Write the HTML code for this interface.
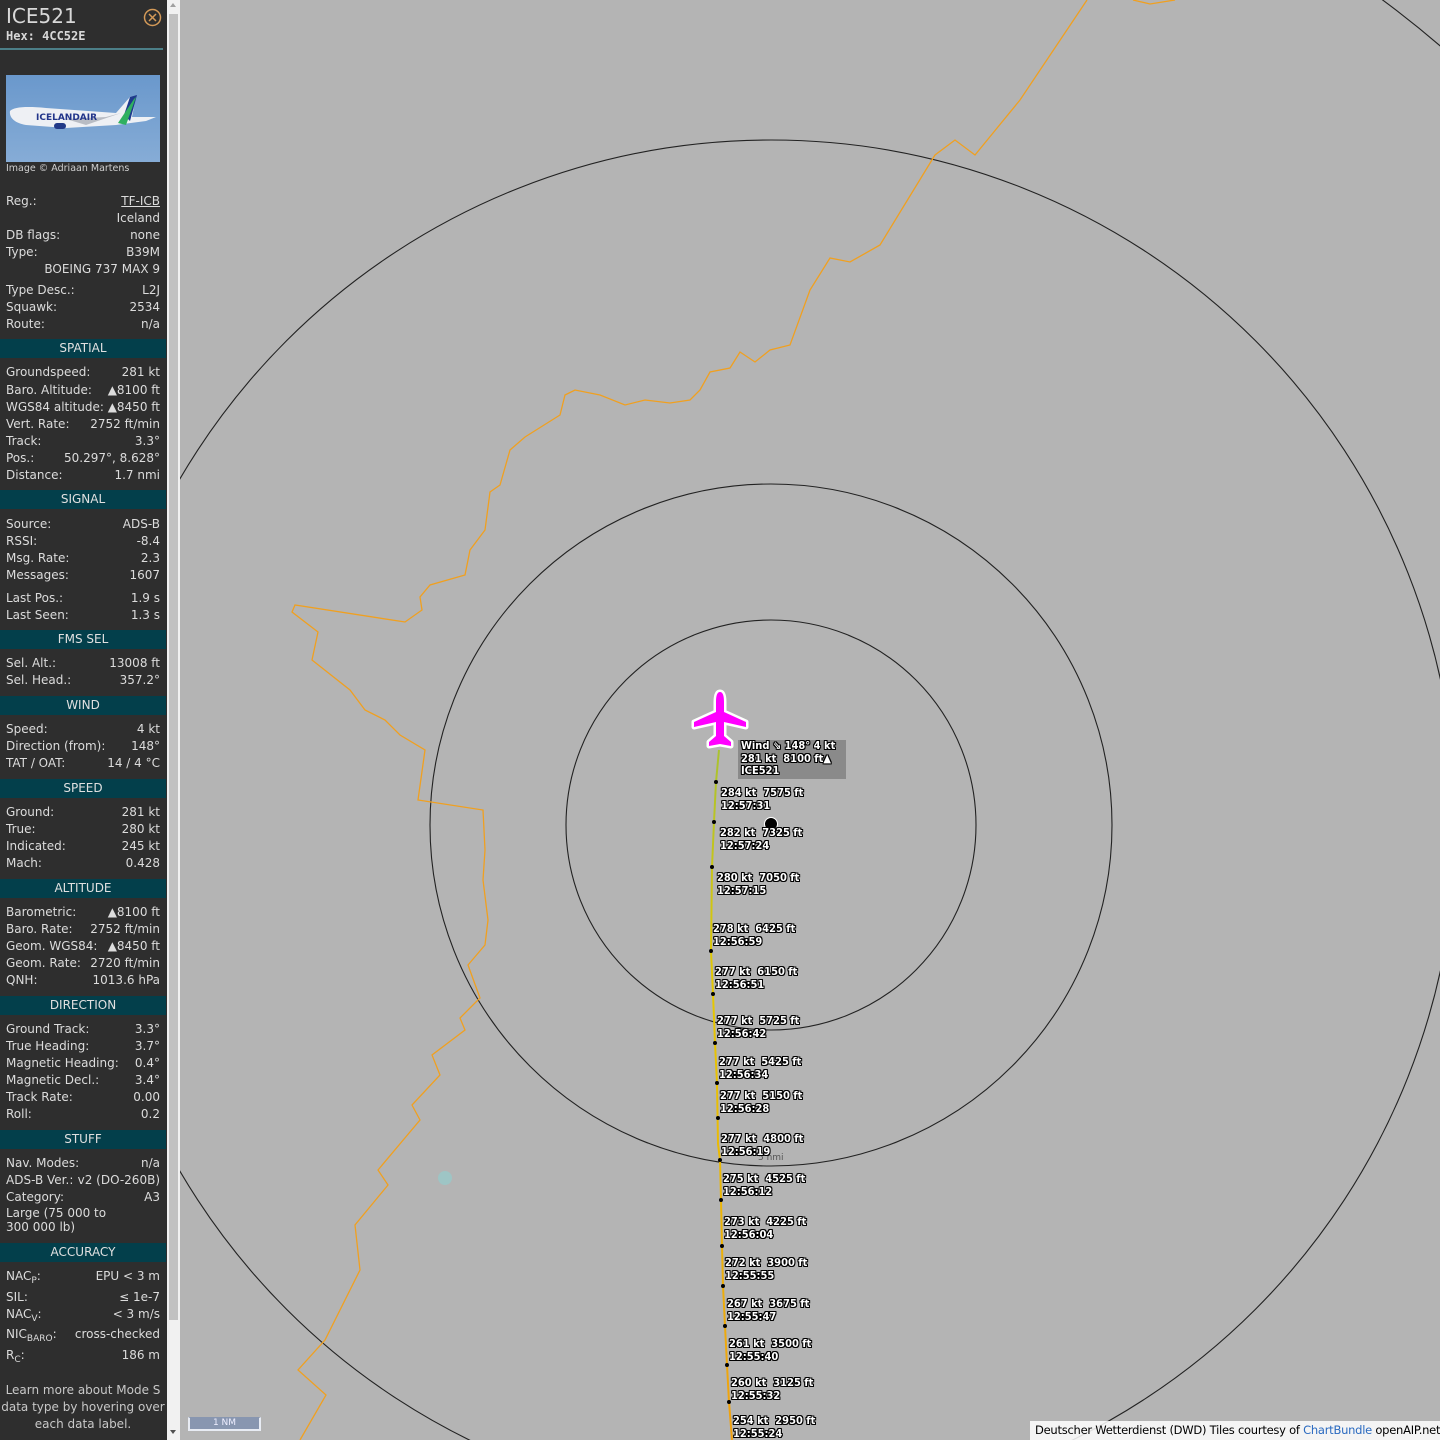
<!DOCTYPE html>
<html><head><meta charset="utf-8">
<style>
*{margin:0;padding:0;box-sizing:border-box}
html,body{width:1440px;height:1440px;overflow:hidden}
body{background:#b4b4b4;font-family:"DejaVu Sans","Liberation Sans",sans-serif;position:relative}
#side{position:absolute;left:0;top:0;width:167px;height:1440px;background:#2e2e2e;color:#dcdcdc;font-size:12px;overflow:hidden}
#side>*{transform:translateY(1px)}
.r{position:absolute;left:6px;width:154px;height:17px;line-height:17px;white-space:nowrap}
.r .v{position:absolute;right:0;top:0}
.h{position:absolute;left:0;width:166px;height:19px;line-height:19px;background:#033f4b;text-align:center;color:#e0e0e0;font-size:12px}
#sb{position:absolute;left:167px;top:0;width:13px;height:1440px;background:#f1f1f1}
#thumb{position:absolute;left:2px;top:14px;width:9px;height:1306px;background:#c1c1c1}
.lab{position:absolute;font-family:"DejaVu Sans Condensed","DejaVu Sans",sans-serif;font-weight:bold;font-size:11px;line-height:12.5px;color:#fff;white-space:nowrap;
text-shadow:1px 0 0 #000,-1px 0 0 #000,0 1px 0 #000,0 -1px 0 #000,1px 1px 0 #000,-1px -1px 0 #000,1px -1px 0 #000,-1px 1px 0 #000}
sub{font-size:9px;vertical-align:-3px;line-height:0}
</style></head><body>
<svg style="position:absolute;left:0;top:0" width="1440" height="1440">
<g fill="none" stroke="#222" stroke-width="1.1">
<circle cx="771" cy="825" r="205"/>
<circle cx="771" cy="825" r="341"/>
<circle cx="771" cy="825" r="685"/>
<circle cx="771" cy="825" r="1027"/>
</g>
<polyline fill="none" stroke="#f0a020" stroke-width="1.3" points="1087,0 1020,100 975,155 955,140 935,155 880,245 850,262 830,258 810,290 790,345 770,350 755,362 740,352 730,368 710,372 700,390 690,400 670,403 645,400 625,405 600,395 575,390 565,395 560,415 525,437 510,450 500,485 490,492 485,530 470,550 465,575 430,585 420,597 422,610 405,622 295,605 292,612 318,632 312,660 350,690 365,710 385,720 400,735 425,750 418,800 483,810 485,850 483,880 488,920 485,945 468,965 480,998 460,1018 465,1030 432,1055 440,1075 412,1105 420,1120 378,1170 388,1185 355,1225 360,1270 325,1340 298,1370 326,1395 300,1440"/>
<polyline fill="none" stroke="#f0a020" stroke-width="1.3" points="1133,0 1150,4 1175,0"/>
<defs><linearGradient id="tg" x1="0" y1="750" x2="0" y2="1440" gradientUnits="userSpaceOnUse"><stop offset="0" stop-color="#a9c230"/><stop offset="0.35" stop-color="#e6c800"/><stop offset="1" stop-color="#f0a010"/></linearGradient></defs>
<polyline fill="none" stroke="url(#tg)" stroke-width="2" points="719,750 716,782 714,822 712,867 711,951 713,994 715,1043 717,1083 718,1144 720,1160 721,1200 722,1246 723,1286 725,1326 727,1365 729,1402 732,1440"/>
<g fill="#000">
<circle cx="716" cy="782" r="2"/><circle cx="714" cy="822" r="2"/><circle cx="712" cy="867" r="2"/><circle cx="711" cy="951" r="2"/><circle cx="713" cy="994" r="2"/><circle cx="715" cy="1043" r="2"/><circle cx="717" cy="1083" r="2"/><circle cx="718" cy="1118" r="2"/><circle cx="720" cy="1160" r="2"/><circle cx="721" cy="1200" r="2"/><circle cx="722" cy="1246" r="2"/><circle cx="723" cy="1286" r="2"/><circle cx="725" cy="1326" r="2"/><circle cx="727" cy="1365" r="2"/><circle cx="729" cy="1402" r="2"/>
</g>
<circle cx="771" cy="824" r="6.5" fill="#000" stroke="#fff" stroke-width="1"/>
<circle cx="445" cy="1178" r="7" fill="#8fd0d0" opacity="0.6"/>
<text x="758" y="1160" font-size="9" fill="#555" font-family="DejaVu Sans">5 nmi</text>
<g transform="translate(720,720)">
<path d="M0,-28 C3,-28 4,-24 4,-18 L4,-8 L26,2 L26,7 L4,2 L4,16 L11,22 L11,26 L0,24 L-11,26 L-11,22 L-4,16 L-4,2 L-26,7 L-26,2 L-4,-8 L-4,-18 C-4,-24 -3,-28 0,-28 Z" fill="#ff00ff" stroke="#fff" stroke-width="5" stroke-linejoin="round"/>
<path d="M0,-28 C3,-28 4,-24 4,-18 L4,-8 L26,2 L26,7 L4,2 L4,16 L11,22 L11,26 L0,24 L-11,26 L-11,22 L-4,16 L-4,2 L-26,7 L-26,2 L-4,-8 L-4,-18 C-4,-24 -3,-28 0,-28 Z" fill="#ff00ff"/>
</g>
<rect x="738" y="740" width="108" height="39" fill="#8a8a8a"/>
</svg>

<div class="lab" style="left:741px;top:740px">Wind ⇘ 148° 4 kt<br>281 kt&nbsp; 8100 ft▲<br>ICE521</div>
<div class="lab" style="left:721px;top:787px">284 kt&nbsp; 7575 ft<br>12:57:31</div>
<div class="lab" style="left:720px;top:827px">282 kt&nbsp; 7325 ft<br>12:57:24</div>
<div class="lab" style="left:717px;top:872px">280 kt&nbsp; 7050 ft<br>12:57:15</div>
<div class="lab" style="left:713px;top:923px">278 kt&nbsp; 6425 ft<br>12:56:59</div>
<div class="lab" style="left:715px;top:966px">277 kt&nbsp; 6150 ft<br>12:56:51</div>
<div class="lab" style="left:717px;top:1015px">277 kt&nbsp; 5725 ft<br>12:56:42</div>
<div class="lab" style="left:719px;top:1056px">277 kt&nbsp; 5425 ft<br>12:56:34</div>
<div class="lab" style="left:720px;top:1090px">277 kt&nbsp; 5150 ft<br>12:56:28</div>
<div class="lab" style="left:721px;top:1133px">277 kt&nbsp; 4800 ft<br>12:56:19</div>
<div class="lab" style="left:723px;top:1173px">275 kt&nbsp; 4525 ft<br>12:56:12</div>
<div class="lab" style="left:724px;top:1216px">273 kt&nbsp; 4225 ft<br>12:56:04</div>
<div class="lab" style="left:725px;top:1257px">272 kt&nbsp; 3900 ft<br>12:55:55</div>
<div class="lab" style="left:727px;top:1298px">267 kt&nbsp; 3675 ft<br>12:55:47</div>
<div class="lab" style="left:729px;top:1338px">261 kt&nbsp; 3500 ft<br>12:55:40</div>
<div class="lab" style="left:731px;top:1377px">260 kt&nbsp; 3125 ft<br>12:55:32</div>
<div class="lab" style="left:733px;top:1415px">254 kt&nbsp; 2950 ft<br>12:55:24</div>

<div style="position:absolute;left:188px;top:1417px;width:73px;height:14px;background:#8896b0;border:2px solid #e8ecf4;border-top:1px solid #8896b0;color:#eef;font-size:9px;text-align:center;line-height:11px">1 NM</div>
<div style="position:absolute;left:1030px;top:1421px;width:410px;height:19px;background:rgba(255,255,255,0.85);font-size:11.5px;letter-spacing:-0.25px;line-height:19px;padding-left:5px;color:#000;white-space:nowrap;overflow:hidden">Deutscher Wetterdienst (DWD) Tiles courtesy of <span style="color:#2a6ac0">ChartBundle</span> openAIP.net</div>

<div id="sb"><div id="thumb"></div><div style="position:absolute;left:3px;top:3px;border:3.5px solid transparent;border-bottom:4px solid #a0a0a0;border-top:0;width:0"></div><div style="position:absolute;left:3px;top:1430px;border:3.5px solid transparent;border-top:4px solid #505050;border-bottom:0;width:0"></div></div>

<div id="side">
<div style="position:absolute;left:6px;top:3px;font-size:20px;color:#d8d8d8">ICE521</div>
<div style="position:absolute;left:6px;top:28px;font-size:12px;font-weight:bold;font-family:'DejaVu Sans Mono',monospace;color:#d8d8d8">Hex: 4CC52E</div>
<svg style="position:absolute;left:143px;top:7px" width="19" height="19"><circle cx="9.5" cy="9.5" r="8" fill="none" stroke="#d49a58" stroke-width="1.5"/><path d="M6,6 L13,13 M13,6 L6,13" stroke="#d49a58" stroke-width="1.5"/></svg>
<div style="position:absolute;left:0;top:47px;width:163px;height:2px;background:#4c7f88"></div>
<svg style="position:absolute;left:6px;top:74px" width="154" height="87">
<defs><linearGradient id="sky" x1="0" y1="0" x2="0" y2="1"><stop offset="0" stop-color="#6a98cc"/><stop offset="1" stop-color="#86acd6"/></linearGradient></defs>
<rect width="154" height="87" fill="url(#sky)"/>
<path d="M4,36 C8,32 20,31 40,33 L110,38 L124,22 L130,21 L126,42 L150,42 L140,46 L110,50 L60,53 L20,50 C8,48 3,42 4,36 Z" fill="#eef0f4"/>
<path d="M118,40 L124,22 L131,20 L124,46 Z" fill="#1e3a8c"/>
<path d="M112,48 L128,24 L130,22 L120,50 Z" fill="#2fb060"/>
<path d="M60,44 L100,42 L115,38 L80,50 Z" fill="#b8bcc4"/>
<rect x="48" y="48" width="12" height="6" rx="3" fill="#223a88"/>
<text x="30" y="45" font-size="9" font-weight="bold" fill="#22358a" font-family="DejaVu Sans">ICELANDAIR</text>
</svg>
<div style="position:absolute;left:6px;top:162px;font-size:9.5px;color:#d0d0d0">Image © Adriaan Martens</div>

<div class="r" style="top:192px">Reg.:<span class="v" style="text-decoration:underline">TF-ICB</span></div>
<div class="r" style="top:209px"><span class="v">Iceland</span></div>
<div class="r" style="top:226px">DB flags:<span class="v">none</span></div>
<div class="r" style="top:243px">Type:<span class="v">B39M</span></div>
<div class="r" style="top:260px"><span class="v">BOEING 737 MAX 9</span></div>
<div class="r" style="top:281px">Type Desc.:<span class="v">L2J</span></div>
<div class="r" style="top:298px">Squawk:<span class="v">2534</span></div>
<div class="r" style="top:315px">Route:<span class="v">n/a</span></div>
<div class="h" style="top:338px">SPATIAL</div>
<div class="r" style="top:363px">Groundspeed:<span class="v">281 kt</span></div>
<div class="r" style="top:381px">Baro. Altitude:<span class="v">▲8100 ft</span></div>
<div class="r" style="top:398px">WGS84 altitude:<span class="v">▲8450 ft</span></div>
<div class="r" style="top:415px">Vert. Rate:<span class="v">2752 ft/min</span></div>
<div class="r" style="top:432px">Track:<span class="v">3.3°</span></div>
<div class="r" style="top:449px">Pos.:<span class="v">50.297°, 8.628°</span></div>
<div class="r" style="top:466px">Distance:<span class="v">1.7 nmi</span></div>
<div class="h" style="top:489px">SIGNAL</div>
<div class="r" style="top:515px">Source:<span class="v">ADS-B</span></div>
<div class="r" style="top:532px">RSSI:<span class="v">-8.4</span></div>
<div class="r" style="top:549px">Msg. Rate:<span class="v">2.3</span></div>
<div class="r" style="top:566px">Messages:<span class="v">1607</span></div>
<div class="r" style="top:589px">Last Pos.:<span class="v">1.9 s</span></div>
<div class="r" style="top:606px">Last Seen:<span class="v">1.3 s</span></div>
<div class="h" style="top:629px">FMS SEL</div>
<div class="r" style="top:654px">Sel. Alt.:<span class="v">13008 ft</span></div>
<div class="r" style="top:671px">Sel. Head.:<span class="v">357.2°</span></div>
<div class="h" style="top:695px">WIND</div>
<div class="r" style="top:720px">Speed:<span class="v">4 kt</span></div>
<div class="r" style="top:737px">Direction (from):<span class="v">148°</span></div>
<div class="r" style="top:754px">TAT / OAT:<span class="v">14 / 4 °C</span></div>
<div class="h" style="top:778px">SPEED</div>
<div class="r" style="top:803px">Ground:<span class="v">281 kt</span></div>
<div class="r" style="top:820px">True:<span class="v">280 kt</span></div>
<div class="r" style="top:837px">Indicated:<span class="v">245 kt</span></div>
<div class="r" style="top:854px">Mach:<span class="v">0.428</span></div>
<div class="h" style="top:878px">ALTITUDE</div>
<div class="r" style="top:903px">Barometric:<span class="v">▲8100 ft</span></div>
<div class="r" style="top:920px">Baro. Rate:<span class="v">2752 ft/min</span></div>
<div class="r" style="top:937px">Geom. WGS84:<span class="v">▲8450 ft</span></div>
<div class="r" style="top:954px">Geom. Rate:<span class="v">2720 ft/min</span></div>
<div class="r" style="top:971px">QNH:<span class="v">1013.6 hPa</span></div>
<div class="h" style="top:995px">DIRECTION</div>
<div class="r" style="top:1020px">Ground Track:<span class="v">3.3°</span></div>
<div class="r" style="top:1037px">True Heading:<span class="v">3.7°</span></div>
<div class="r" style="top:1054px">Magnetic Heading:<span class="v">0.4°</span></div>
<div class="r" style="top:1071px">Magnetic Decl.:<span class="v">3.4°</span></div>
<div class="r" style="top:1088px">Track Rate:<span class="v">0.00</span></div>
<div class="r" style="top:1105px">Roll:<span class="v">0.2</span></div>
<div class="h" style="top:1129px">STUFF</div>
<div class="r" style="top:1154px">Nav. Modes:<span class="v">n/a</span></div>
<div class="r" style="top:1171px">ADS-B Ver.:<span class="v">v2 (DO-260B)</span></div>
<div class="r" style="top:1188px">Category:<span class="v">A3</span></div>
<div style="position:absolute;left:6px;top:1206px;font-size:12px;line-height:13.5px">Large (75 000 to<br>300 000 lb)</div>
<div class="h" style="top:1242px">ACCURACY</div>
<div class="r" style="top:1267px">NAC<sub>P</sub>:<span class="v">EPU &lt; 3 m</span></div>
<div class="r" style="top:1288px">SIL:<span class="v">≤ 1e-7</span></div>
<div class="r" style="top:1305px">NAC<sub>V</sub>:<span class="v">&lt; 3 m/s</span></div>
<div class="r" style="top:1325px">NIC<sub>BARO</sub>:<span class="v">cross-checked</span></div>
<div class="r" style="top:1346px">R<sub>C</sub>:<span class="v">186 m</span></div>
<div style="position:absolute;left:0;width:166px;top:1381px;text-align:center;font-size:12px;line-height:17px;color:#c8c8c8">Learn more about Mode S<br>data type by hovering over<br>each data label.</div>
</div>
</body></html>
